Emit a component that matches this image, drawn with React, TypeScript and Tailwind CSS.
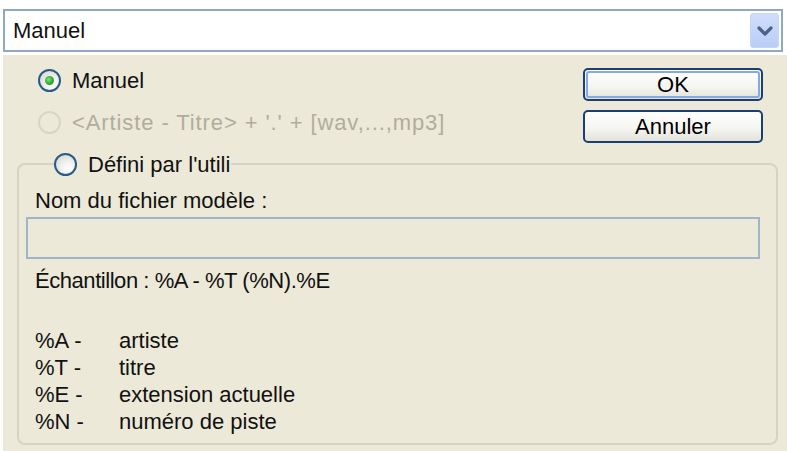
import React from "react";

function Radio({ checked, disabled }: { checked?: boolean; disabled?: boolean }) {
  if (disabled) {
    return (
      <span className="w-[23px] h-[23px] rounded-full border-2 border-[#d8d5c8] bg-[#ece9d8] shrink-0" />
    );
  }
  return (
    <span className="w-[23px] h-[23px] rounded-full border-2 border-[#2a5a86] bg-[radial-gradient(circle_at_65%_70%,#ffffff_0%,#f0f0ec_40%,#d2d2c8_100%)] shrink-0 flex items-center justify-center">
      {checked && (
        <span className="w-[9px] h-[9px] rounded-full bg-[radial-gradient(circle_at_40%_40%,#7ee37e_0%,#2aa32a_60%,#1f8a1f_100%)]" />
      )}
    </span>
  );
}

function XpButton({ label, isDefault }: { label: string; isDefault?: boolean }) {
  return (
    <div className="w-[180px] h-[36px] rounded-[5px] border-2 border-[#1c3f73] bg-[linear-gradient(#ffffff,#f4f4f0_60%,#e3e2da)] p-[1px]">
      <div
        className={
          isDefault
            ? "w-full h-full rounded-[3px] border-2 border-[#86a8e8] flex items-center justify-center"
            : "w-full h-full rounded-[3px] flex items-center justify-center"
        }
      >
        <span className="text-[22px] leading-none text-black">{label}</span>
      </div>
    </div>
  );
}

export default function App() {
  const legend: [string, string][] = [
    ["%A -", "artiste"],
    ["%T -", "titre"],
    ["%E -", "extension actuelle"],
    ["%N -", "numéro de piste"],
  ];
  return (
    <div
      className="w-[787px] h-[451px] bg-white flex flex-col overflow-hidden text-[#111]"
      style={{ fontFamily: '"Liberation Sans", Arial, sans-serif' }}
    >
      {/* combo box */}
      <div className="mt-[9px] ml-[3px] w-[780px] h-[43px] border-2 border-[#8fa9c4] bg-white flex items-center pl-[8px] pr-[2px]">
        <span className="text-[22px] flex-1">Manuel</span>
        <div className="w-[29px] h-[35px] rounded-[3px] bg-[linear-gradient(#d0defc,#b9cdf8)] border border-[#c6d5f7] flex items-center justify-center">
          <svg width="16" height="12" viewBox="0 0 16 12">
            <path d="M2 3 L8 9 L14 3" fill="none" stroke="#4d6185" strokeWidth="3.2" strokeLinecap="round" strokeLinejoin="round" />
          </svg>
        </div>
      </div>

      {/* dialog body */}
      <div className="mt-[3px] ml-[3px] flex-1 bg-[#ece9d8] flex flex-col">
        <div className="h-[88px] flex">
          <div className="flex-1 pt-[4px] pl-[35px] flex flex-col">
            <div className="h-[42px] flex items-center gap-[11px]">
              <Radio checked />
              <span className="text-[22px]">Manuel</span>
            </div>
            <div className="h-[42px] flex items-center gap-[11px]">
              <Radio disabled />
              <span className="text-[22px] tracking-[0.9px] text-[#b0ad9e]">&lt;Artiste - Titre&gt; + '.' + [wav,...,mp3]</span>
            </div>
          </div>
          <div className="w-[204px] pt-[13px] flex flex-col gap-[9px] z-10">
            <XpButton label="OK" isDefault />
            <XpButton label="Annuler" />
          </div>
        </div>

        <fieldset className="ml-[14px] w-[761px] h-[302px] border-2 border-[#d6d3c4] rounded-[8px] pl-[16px] flex flex-col">
          <legend className="ml-[19px] h-[42px] flex items-center gap-[11px] pr-[1px] bg-[#ece9d8]">
            <Radio />
            <span className="text-[22px]">Défini par l'utili</span>
          </legend>
          <div className="text-[22px] leading-[27px] mt-[2px]">Nom du fichier modèle :</div>
          <div className="mt-[3px] -ml-[9px] w-[734px] h-[42px] border-2 border-[#9fb5cc] bg-[#ece9d8]" />
          <div className="mt-[8px] text-[22px] leading-[27px] tracking-[-0.45px]">Échantillon : %A - %T (%N).%E</div>
          <div className="mt-[33px] flex flex-col">
            {legend.map(([k, v]) => (
              <div key={k} className="flex text-[22px] leading-[27px]">
                <span className="w-[84px]">{k}</span>
                <span>{v}</span>
              </div>
            ))}
          </div>
        </fieldset>
      </div>
    </div>
  );
}
